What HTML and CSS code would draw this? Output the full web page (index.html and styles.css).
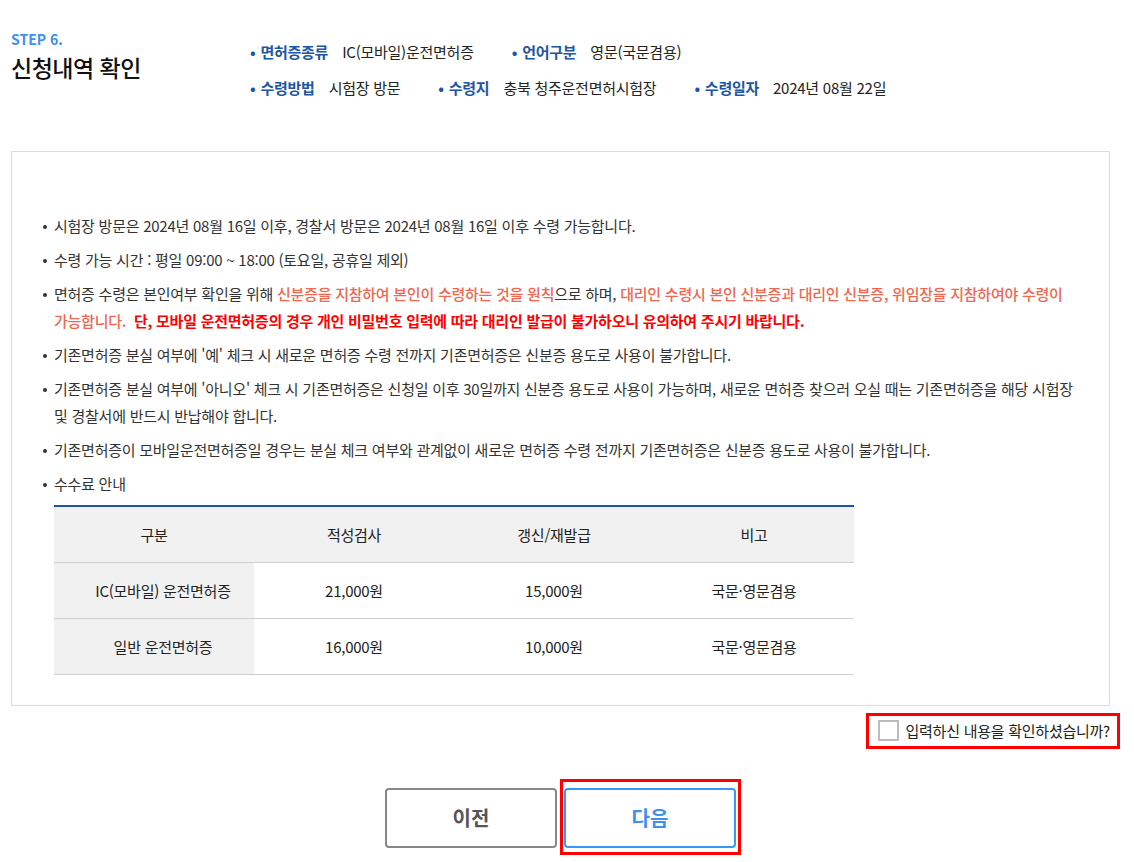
FILE: index.html
```html
<!DOCTYPE html>
<html lang="ko">
<head>
    <meta charset="UTF-8">
    <meta name="viewport" content="width=device-width, initial-scale=1.0">
    <title>신청내역 확인</title>
    <link rel="stylesheet" href="styles.css">
</head>
<body>
    <div class="page">
        <div class="step-head">
            <div class="step-title">
                <p class="step-no">STEP 6.</p>
                <h1>신청내역 확인</h1>
            </div>
            <div class="summary">
                <div class="summary-row">
                    <span class="item"><b>면허증종류</b>IC(모바일)운전면허증</span>
                    <span class="item"><b>언어구분</b>영문(국문겸용)</span>
                </div>
                <div class="summary-row">
                    <span class="item"><b>수령방법</b>시험장 방문</span>
                    <span class="item"><b>수령지</b>충북 청주운전면허시험장</span>
                    <span class="item"><b>수령일자</b>2024년 08월 22일</span>
                </div>
            </div>
        </div>

        <div class="notice-box">
            <ul class="notice">
                <li>시험장 방문은 2024년 08월 16일 이후, 경찰서 방문은 2024년 08월 16일 이후 수령 가능합니다.</li>
                <li>수령 가능 시간 : 평일 09:00 ~ 18:00 (토요일, 공휴일 제외)</li>
                <li>면허증 수령은 본인여부 확인을 위해 <span class="warn">신분증을 지참하여 본인이 수령하는 것을 원칙</span>으로 하며, <span class="warn">대리인 수령시 본인 신분증과 대리인 신분증, 위임장을 지참하여야 수령이 가능합니다.</span>&nbsp; <strong class="alert">단, 모바일 운전면허증의 경우 개인 비밀번호 입력에 따라 대리인 발급이 불가하오니 유의하여 주시기 바랍니다.</strong></li>
                <li>기존면허증 분실 여부에 '예' 체크 시 새로운 면허증 수령 전까지 기존면허증은 신분증 용도로 사용이 불가합니다.</li>
                <li>기존면허증 분실 여부에 '아니오' 체크 시 기존면허증은 신청일 이후 30일까지 신분증 용도로 사용이 가능하며, 새로운 면허증 찾으러 오실 때는 기존면허증을 해당 시험장 및 경찰서에 반드시 반납해야 합니다.</li>
                <li>기존면허증이 모바일운전면허증일 경우는 분실 체크 여부와 관계없이 새로운 면허증 수령 전까지 기존면허증은 신분증 용도로 사용이 불가합니다.</li>
                <li>수수료 안내</li>
            </ul>

            <table class="fee">
                <thead>
                    <tr>
                        <th>구분</th>
                        <th>적성검사</th>
                        <th>갱신/재발급</th>
                        <th>비고</th>
                    </tr>
                </thead>
                <tbody>
                    <tr>
                        <th>IC(모바일) 운전면허증</th>
                        <td>21,000원</td>
                        <td>15,000원</td>
                        <td>국문·영문겸용</td>
                    </tr>
                    <tr>
                        <th>일반 운전면허증</th>
                        <td>16,000원</td>
                        <td>10,000원</td>
                        <td>국문·영문겸용</td>
                    </tr>
                </tbody>
            </table>
        </div>

        <div class="confirm-row">
            <label class="confirm">
                <input type="checkbox">
                <span class="box"></span>
                입력하신 내용을 확인하셨습니까?
            </label>
        </div>

        <div class="btn-row">
            <button class="btn btn-prev">이전</button>
            <span class="focus-mark"><button class="btn btn-next">다음</button></span>
        </div>
    </div>
</body>
</html>
```

FILE: styles.css
```css
* {
    box-sizing: border-box;
}

body {
    margin: 0;
    font-family: "Noto Sans CJK KR", "Noto Sans", sans-serif;
    font-size: 15px;
    letter-spacing: -0.25px;
    word-break: keep-all;
    color: #333;
    background: #fff;
}

.page {
    width: 1134px;
    padding: 28px 14px 0 11px;
}

/* header */
.step-head {
    display: flex;
    align-items: flex-start;
}

.step-title {
    width: 239px;
}

.step-no {
    margin: 0;
    color: #3d8ff0;
    font-size: 14px;
    font-weight: 700;
    line-height: 22px;
    letter-spacing: 0;
}

h1 {
    margin: 0;
    font-size: 23px;
    font-weight: 500;
    color: #111;
    line-height: 34px;
    letter-spacing: -0.5px;
}

.summary {
    padding-top: 5px;
}

.summary-row {
    display: flex;
    height: 36px;
    align-items: center;
}

.item {
    margin-right: 38px;
    color: #222;
    font-size: 15px;
}

.item b {
    color: #1d56a5;
    font-weight: 700;
    margin-right: 14px;
}

.item b::before {
    content: "•";
    margin-right: 5px;
}

/* notice box */
.notice-box {
    margin: 46px 10px 0 0;
    border: 1px solid #dcdcdc;
    padding: 60px 28px 30px 42px;
}

.notice {
    margin: 0;
    padding: 0;
    list-style: none;
}

.notice li {
    position: relative;
    line-height: 27px;
    margin-bottom: 7px;
    color: #333;
}

.notice li::before {
    content: "";
    position: absolute;
    left: -11px;
    top: 13px;
    width: 4px;
    height: 4px;
    border-radius: 50%;
    background: #333;
}

.warn {
    color: #f2664f;
    font-weight: 500;
}

.alert {
    color: #ff0000;
    font-weight: 700;
}

/* fee table */
.fee {
    width: 800px;
    margin-top: 8px;
    border-collapse: collapse;
    border-top: 2px solid #1d56a5;
    table-layout: fixed;
}

.fee th,
.fee td {
    height: 56px;
    text-align: center;
    font-size: 15px;
    font-weight: 400;
    color: #222;
    border-bottom: 1px solid #cfcfcf;
    padding: 0;
}

.fee thead th {
    background: #f1f1f1;
}

.fee tbody th {
    background: #f1f1f1;
    padding-left: 18px;
}

/* confirm */
.confirm-row {
    display: flex;
    justify-content: flex-end;
    margin-top: 7px;
}

.confirm {
    display: flex;
    align-items: center;
    gap: 7px;
    height: 36px;
    padding: 0 7px 0 9px;
    border: 3px solid #ff0000;
    font-size: 15px;
    color: #222;
    cursor: pointer;
}

.confirm input {
    display: none;
}

.confirm .box {
    width: 21px;
    height: 21px;
    border: 2px solid #bbb;
    background: #fff;
}

/* buttons */
.btn-row {
    display: flex;
    justify-content: center;
    align-items: center;
    gap: 3px;
    margin: 30px 5px 0 0;
}

.btn {
    width: 172px;
    height: 60px;
    background: #fff;
    border-radius: 4px;
    font-family: inherit;
    font-size: 20px;
    font-weight: 700;
    cursor: pointer;
}

.btn-prev {
    border: 2px solid #888;
    color: #555;
    margin-top: 2px;
}

.focus-mark {
    display: inline-flex;
    padding: 6px 2px 4px 1px;
    border: 3px solid #ff0000;
}

.btn-next {
    border: 2px solid #3399ff;
    color: #3d8ff0;
}
```
